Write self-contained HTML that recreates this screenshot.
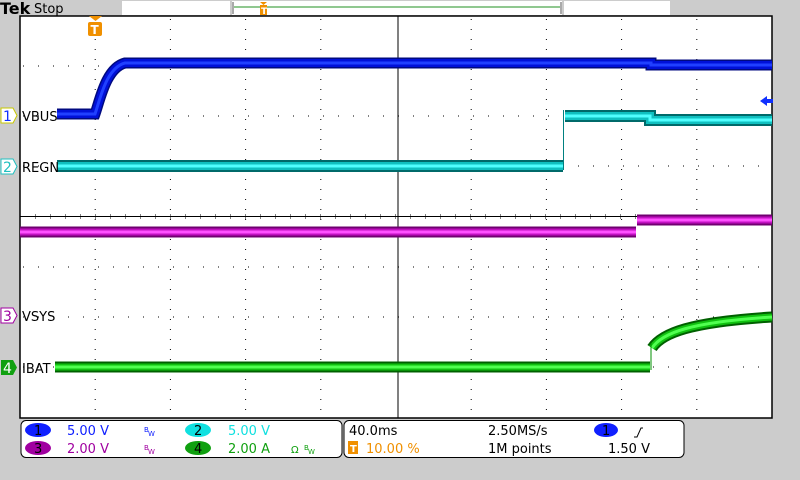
<!DOCTYPE html>
<html><head><meta charset="utf-8"><style>
html,body{margin:0;padding:0;background:#cccccc;width:800px;height:480px;overflow:hidden}
svg{display:block}
text{font-family:"DejaVu Sans","Liberation Sans",sans-serif}
</style></head><body>
<svg width="800" height="480" viewBox="0 0 800 480" xmlns="http://www.w3.org/2000/svg">
<rect width="800" height="480" fill="#cccccc"/>
<text x="0" y="14" font-family="Liberation Serif,serif" font-weight="bold" font-size="16" fill="#000">Tek</text>
<text x="34" y="13" font-size="13" fill="#000">Stop</text>
<rect x="122" y="1" width="108" height="14" fill="#fff"/>
<rect x="232" y="1" width="330" height="14" fill="#fff"/>
<rect x="232" y="2" width="2" height="12" fill="#aaa"/><rect x="560" y="2" width="2" height="12" fill="#aaa"/>
<line x1="234" y1="7" x2="560" y2="7" stroke="#209020" stroke-width="1"/>
<rect x="564" y="1" width="106" height="14" fill="#fff"/>
<path d="M260 2h7l-3.5 3z" fill="#f09000"/><rect x="260" y="5" width="7" height="10" fill="#f09000"/><text x="261" y="14" font-size="9" fill="#fff" font-weight="bold">T</text>
<rect x="20" y="16" width="752" height="402" fill="#fff" stroke="#000" stroke-width="1.5"/>
<g stroke="#000" stroke-width="1" stroke-dasharray="1 9">
<line x1="95.2" y1="19" x2="95.2" y2="417"/><line x1="170.4" y1="19" x2="170.4" y2="417"/><line x1="245.6" y1="19" x2="245.6" y2="417"/><line x1="320.8" y1="19" x2="320.8" y2="417"/>
<line x1="471.2" y1="19" x2="471.2" y2="417"/><line x1="546.4" y1="19" x2="546.4" y2="417"/><line x1="621.6" y1="19" x2="621.6" y2="417"/><line x1="696.8" y1="19" x2="696.8" y2="417"/>
<line x1="23" y1="66" x2="772" y2="66" stroke-dasharray="1 14"/><line x1="23" y1="116" x2="772" y2="116" stroke-dasharray="1 14"/><line x1="23" y1="166" x2="772" y2="166" stroke-dasharray="1 14"/>
<line x1="23" y1="267" x2="772" y2="267" stroke-dasharray="1 14"/><line x1="23" y1="317" x2="772" y2="317" stroke-dasharray="1 14"/><line x1="23" y1="367" x2="772" y2="367" stroke-dasharray="1 14"/>
</g>
<line x1="20" y1="216.5" x2="772" y2="216.5" stroke="#000"/>
<line x1="398" y1="16" x2="398" y2="418" stroke="#000"/>
<g stroke="#000" stroke-dasharray="1 14">
<line x1="35" y1="215" x2="772" y2="215"/><line x1="35" y1="218" x2="772" y2="218"/>
</g>
<g fill="none" stroke-linejoin="miter">
<path d="M57 114H95C100 100 106 68 125 63H651V65H772" stroke="#000a80" stroke-width="11"/>
<path d="M57 114H95C100 100 106 68 125 63H651V65H772" stroke="#0010d8" stroke-width="8"/>
<path d="M57 114H95C100 100 106 68 125 63H651V65H772" stroke="#2040ff" stroke-width="3"/>
<path d="M57 166H563M565 116H650V120H772" stroke="#006a6a" stroke-width="12"/>
<path d="M57 166H563M565 116H650V120H772" stroke="#10c0c0" stroke-width="8"/>
<path d="M57 166H563M565 116H650V120H772" stroke="#50ffff" stroke-width="3"/>
<path d="M20 232H636M637 220H772" stroke="#700070" stroke-width="11"/>
<path d="M20 232H636M637 220H772" stroke="#c010c0" stroke-width="7"/>
<path d="M20 232H636M637 220H772" stroke="#ff50ff" stroke-width="3"/>
<path d="M55 367H650M652 348C662 333 690 322 772 317" stroke="#006000" stroke-width="11"/>
<path d="M55 367H650M652 348C662 333 690 322 772 317" stroke="#10c010" stroke-width="7"/>
<path d="M55 367H650M652 348C662 333 690 322 772 317" stroke="#50ff50" stroke-width="3"/>
</g>
<line x1="563.5" y1="110" x2="563.5" y2="170" stroke="#008080"/>
<line x1="651" y1="343" x2="651" y2="370" stroke="#009000"/>
<path d="M89 16h13l-6.5 5z" fill="#f09000"/><rect x="88" y="22" width="14" height="14" rx="2" fill="#f09000"/><text x="90.5" y="34" font-size="12" fill="#fff" font-weight="bold">T</text>
<path d="M760 101l7-5v3h6v4h-6v3z" fill="#1030ff"/>
<g font-size="13" fill="#000">
<path d="M1 108h12l4 7.5-4 7.5H1z" fill="#fff" stroke="#c8c800"/><text x="3" y="121" fill="#1030ff" font-size="14">1</text><text x="22" y="121">VBUS</text>
<path d="M1 159h12l4 7.5-4 7.5H1z" fill="#fff" stroke="#20c0c0"/><text x="3" y="172" fill="#20c0c0" font-size="14">2</text><text x="22" y="172">REGN</text>
<path d="M1 308h12l4 7.5-4 7.5H1z" fill="#fff" stroke="#a000a0"/><text x="3" y="321" fill="#a000a0" font-size="14">3</text><text x="22" y="321">VSYS</text>
<path d="M1 360h12l4 7.5-4 7.5H1z" fill="#10a010"/><text x="3" y="373" fill="#fff" font-size="14">4</text><text x="22" y="373">IBAT</text>
</g>
<rect x="21" y="420.5" width="321" height="37" rx="5" fill="#fff" stroke="#000"/>
<rect x="344" y="420.5" width="340" height="37" rx="5" fill="#fff" stroke="#000"/>
<g font-size="13">
<ellipse cx="38" cy="430" rx="13" ry="7" fill="#1020ff"/><text x="34" y="435" fill="#000">1</text>
<text x="67" y="435" fill="#1020ff">5.00 V</text><text x="144" y="432" font-size="7" fill="#1020ff">B</text><text x="148" y="436" font-size="7" fill="#1020ff">W</text>
<ellipse cx="198" cy="430" rx="13" ry="7" fill="#10e0e0"/><text x="194" y="435" fill="#000">2</text>
<text x="228" y="435" fill="#10e0e0">5.00 V</text>
<ellipse cx="38" cy="448" rx="13" ry="7" fill="#a000a0"/><text x="34" y="453" fill="#000">3</text>
<text x="67" y="453" fill="#a000a0">2.00 V</text><text x="144" y="450" font-size="7" fill="#a000a0">B</text><text x="148" y="454" font-size="7" fill="#a000a0">W</text>
<ellipse cx="198" cy="448" rx="13" ry="7" fill="#10a010"/><text x="194" y="453" fill="#000">4</text>
<text x="228" y="453" fill="#10a010">2.00 A</text><text x="291" y="453" font-size="10" fill="#10a010">Ω</text><text x="304" y="450" font-size="7" fill="#10a010">B</text><text x="308" y="454" font-size="7" fill="#10a010">W</text>
<text x="349" y="435" fill="#000">40.0ms</text>
<rect x="348" y="441" width="10" height="13" fill="#f09000"/><text x="350" y="452" font-size="10" fill="#fff" font-weight="bold">T</text>
<text x="366" y="453" fill="#f09000">10.00 %</text>
<text x="488" y="435" fill="#000">2.50MS/s</text>
<text x="488" y="453" fill="#000">1M points</text>
<ellipse cx="606" cy="430" rx="12" ry="7" fill="#1020ff"/><text x="602" y="435" fill="#000">1</text>
<path d="M634 437h3l4-9h2" stroke="#000" fill="none"/>
<text x="608" y="453" fill="#000">1.50 V</text>
</g>
</svg>
</body></html>
